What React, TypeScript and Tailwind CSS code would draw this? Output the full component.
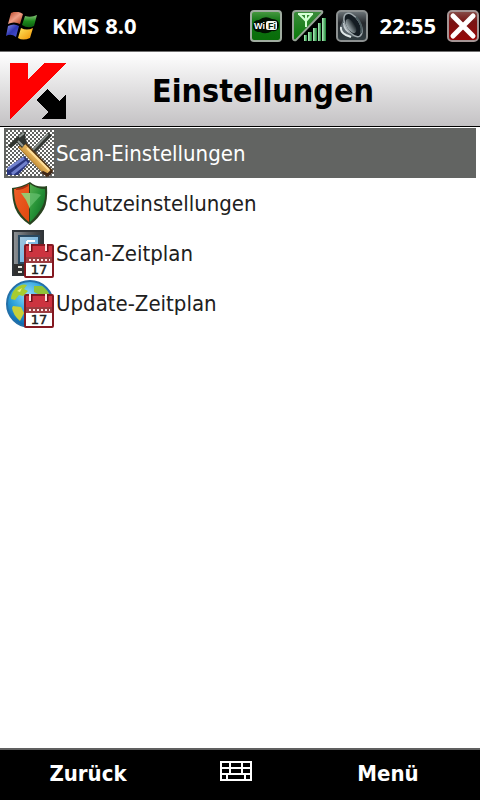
import type { ReactNode } from "react";

function WindowsLogo() {
    return (
        <svg viewBox="0 0 32 28" className="h-7 w-8" aria-hidden="true">
            <defs>
                <linearGradient id="flagRed" x1="0" y1="0" x2="1" y2="1">
                    <stop offset="0" stopColor="#b03a1c" />
                    <stop offset="0.5" stopColor="#f0a088" />
                    <stop offset="1" stopColor="#a83412" />
                </linearGradient>
                <linearGradient id="flagGreen" x1="0" y1="0" x2="0" y2="1">
                    <stop offset="0" stopColor="#8cc47c" />
                    <stop offset="0.5" stopColor="#1c8a1c" />
                    <stop offset="1" stopColor="#0c5c10" />
                </linearGradient>
                <linearGradient id="flagBlue" x1="0" y1="0" x2="1" y2="1">
                    <stop offset="0" stopColor="#8c94e4" />
                    <stop offset="0.5" stopColor="#3038b4" />
                    <stop offset="1" stopColor="#4c58d0" />
                </linearGradient>
                <linearGradient id="flagYellow" x1="0" y1="0" x2="1" y2="1">
                    <stop offset="0" stopColor="#ffe860" />
                    <stop offset="1" stopColor="#f09000" />
                </linearGradient>
            </defs>
            <path d="M5 1Q11-2 17 2L14 12Q8 9 2 12Z" fill="url(#flagRed)" />
            <path d="M19 4Q25 6 31 3L28 14Q22 17 16 13Z" fill="url(#flagGreen)" />
            <path d="M2 14Q8 11 13 14L10 25Q5 21 0 24Z" fill="url(#flagBlue)" />
            <path d="M15 16Q21 19 27 16L24 26Q17 29 12 26Z" fill="url(#flagYellow)" />
        </svg>
    );
}

function WifiIcon() {
    return (
        <svg viewBox="0 0 32 32" className="size-8" role="img" aria-label="WiFi">
            <defs>
                <linearGradient id="wifiBg" x1="0" y1="0" x2="0" y2="1">
                    <stop offset="0" stopColor="#4c9c44" />
                    <stop offset="0.35" stopColor="#107414" />
                    <stop offset="1" stopColor="#086c08" />
                </linearGradient>
            </defs>
            <rect x="1" y="1" width="30" height="30" rx="3" fill="url(#wifiBg)" stroke="#a0aca0" strokeWidth="2" />
            <path d="M3 16Q3 10 9 10Q15 5 22 9Q29 9 29 15Q29 22 22 21Q16 25 10 22Q3 22 3 16Z" fill="#021002" />
            <rect x="16" y="11" width="11" height="9" rx="2" fill="#f4f8f4" />
            <g fontFamily="Liberation Sans, sans-serif" fontSize="9" fontWeight="700">
                <text x="4" y="19" fill="#ffffff">Wi</text>
                <text x="18" y="19" fill="#042004">Fi</text>
            </g>
        </svg>
    );
}

function SignalIcon() {
    return (
        <svg viewBox="0 0 34 32" className="h-8 w-[34px]" role="img" aria-label="Signal">
            <defs>
                <linearGradient id="barFill" x1="0" y1="0" x2="1" y2="0">
                    <stop offset="0" stopColor="#b8f0c4" />
                    <stop offset="1" stopColor="#188030" />
                </linearGradient>
                <linearGradient id="signalBg" x1="0" y1="0" x2="0" y2="1">
                    <stop offset="0" stopColor="#3c8c3c" />
                    <stop offset="1" stopColor="#087808" />
                </linearGradient>
            </defs>
            <path d="M4 1H29Q31 1 30 3L4 30Q1 31 1 28V4Q1 1 4 1Z" fill="url(#signalBg)" stroke="#98a498" strokeWidth="2" />
            <path d="M6 4H21M7 4L14 11L20 4M14 4V17" fill="none" stroke="#d4ffd4" strokeWidth="2" />
            <g fill="url(#barFill)">
                <rect x="12" y="25" width="3" height="6" />
                <rect x="16" y="22" width="4" height="9" />
                <rect x="21" y="18" width="4" height="13" />
                <rect x="26" y="13" width="3" height="18" />
                <rect x="30" y="8" width="4" height="23" />
            </g>
        </svg>
    );
}

function SpeakerIcon() {
    return (
        <svg viewBox="0 0 32 32" className="size-8" role="img" aria-label="Lautstärke">
            <defs>
                <linearGradient id="speakerBg" x1="0" y1="0" x2="0" y2="1">
                    <stop offset="0" stopColor="#70787c" />
                    <stop offset="0.4" stopColor="#24282c" />
                    <stop offset="1" stopColor="#303c40" />
                </linearGradient>
                <linearGradient id="cone" x1="0" y1="0" x2="1" y2="0">
                    <stop offset="0" stopColor="#a8b4b8" />
                    <stop offset="1" stopColor="#141c20" />
                </linearGradient>
            </defs>
            <rect x="1" y="1" width="30" height="30" rx="4" fill="url(#speakerBg)" stroke="#8c9090" strokeWidth="2" />
            <path d="M4 17L9 6L22 26L13 27Q4 25 4 17Z" fill="#59646a" />
            <path d="M5 17Q4 22 10 25L15 27" fill="none" stroke="#e0e8e8" strokeWidth="2" />
            <path d="M8 13Q8 20 15 23" fill="none" stroke="#c4ccd0" strokeWidth="2" />
            <ellipse cx="17" cy="15" rx="7" ry="13" transform="rotate(-32 17 15)" fill="#141c22" stroke="#a0aaae" strokeWidth="1.500" />
            <ellipse cx="15" cy="16" rx="4" ry="8" transform="rotate(-32 15 16)" fill="url(#cone)" />
            <path d="M20 7Q27 14 25 23" fill="none" stroke="#4c5c60" strokeWidth="2" />
        </svg>
    );
}

function CloseIcon() {
    return (
        <svg viewBox="0 0 32 32" className="size-8" aria-hidden="true">
            <defs>
                <linearGradient id="closeBg" x1="0" y1="0" x2="0" y2="1">
                    <stop offset="0" stopColor="#88504c" />
                    <stop offset="0.35" stopColor="#781414" />
                    <stop offset="1" stopColor="#980808" />
                </linearGradient>
            </defs>
            <rect x="1" y="1" width="30" height="30" rx="4" fill="url(#closeBg)" stroke="#a49494" strokeWidth="2" />
            <path d="M6 6L26 26M26 6L6 26" stroke="#ffffff" strokeWidth="5" strokeLinecap="round" />
        </svg>
    );
}

function KasperskyLogo() {
    return (
        <svg viewBox="0 0 56 56" className="size-14" shapeRendering="crispEdges" aria-hidden="true">
            <path d="M0 0H18V16L34 0H56L0 56Z" fill="#ff0000" />
            <path d="M37 26L49 38L56 32V56H31L38 49L26 37Z" fill="#000000" />
        </svg>
    );
}

function ToolsIcon() {
    return (
        <svg viewBox="0 0 50 50" className="size-[50px]" aria-hidden="true">
            <defs>
                <pattern id="dither" width="4" height="4" patternUnits="userSpaceOnUse">
                    <rect width="4" height="4" fill="#ffffff" />
                    <rect width="2" height="2" fill="#626462" />
                    <rect x="2" y="2" width="2" height="2" fill="#626462" />
                </pattern>
                <linearGradient id="wood" x1="0" y1="1" x2="1" y2="0">
                    <stop offset="0.300" stopColor="#b07820" />
                    <stop offset="0.600" stopColor="#f0c068" />
                </linearGradient>
            </defs>
            <rect width="50" height="50" fill="#626462" />
            <rect x="2" y="2" width="48" height="46" fill="url(#dither)" shapeRendering="crispEdges" />
            <path d="M46 6L26 27" stroke="#343834" strokeWidth="5" />
            <path d="M44 6L25 26" stroke="#808884" strokeWidth="2" />
            <path d="M3 41L20 28L26 34L14 47H3Z" fill="#28347c" />
            <path d="M4 41L20 30M8 46L23 34" stroke="#7080cc" strokeWidth="3" />
            <path d="M17 16L46 46" stroke="#503414" strokeWidth="9" />
            <path d="M17 17L44 45" stroke="url(#wood)" strokeWidth="7" />
            <path d="M23 20L45 42" stroke="#ffe09c" strokeWidth="2" />
            <path d="M4 18L15 7Q19 3 22 4L21 9L23 14L18 20L13 15L7 20Z" fill="#303430" />
            <path d="M14 13L19 18M15 9L20 5" stroke="#909894" strokeWidth="2" />
            <path d="M38 44L44 47L48 43" fill="none" stroke="#402818" strokeWidth="3" />
        </svg>
    );
}

function ShieldIcon() {
    return (
        <svg viewBox="0 0 50 50" className="size-[50px]" aria-hidden="true">
            <defs>
                <linearGradient id="shieldGreen" x1="0" y1="0" x2="1" y2="1">
                    <stop offset="0" stopColor="#58b050" />
                    <stop offset="0.450" stopColor="#289438" />
                    <stop offset="1" stopColor="#086420" />
                </linearGradient>
                <linearGradient id="shieldRed" x1="0" y1="0" x2="1" y2="1">
                    <stop offset="0" stopColor="#f06028" />
                    <stop offset="1" stopColor="#e04810" />
                </linearGradient>
            </defs>
            <path d="M26 4Q33 10 43 8Q44 23 40 31Q35 40 26 47Q15 40 11 30Q8 21 8 10Q18 9 26 4Z" fill="#284420" />
            <path d="M25 6Q18 11 10 11Q10 22 13 29Q17 38 25 44Z" fill="url(#shieldRed)" />
            <path d="M26 6Q33 11 41 11Q42 22 38 29Q33 38 26 44Z" fill="url(#shieldGreen)" />
            <path d="M17 15H26V31L22 22Z" fill="#98c870" />
            <path d="M26 15Q34 15 37 17L26 29Z" fill="#68c070" opacity="0.7" />
            <path d="M12 11Q19 11 24 7" fill="none" stroke="#a83010" strokeWidth="2" />
        </svg>
    );
}

// Small red calendar sheet laid over the bottom right of the schedule icons
function CalendarBadge() {
    return (
        <g>
            <rect x="21" y="17" width="28" height="32" rx="1" fill="#ffffff" stroke="#841820" strokeWidth="2" />
            <rect x="22" y="18" width="26" height="11" fill="#cc3440" />
            <rect x="22" y="29" width="26" height="6" fill="#9c3c40" />
            <path d="M25 32H46" stroke="#ffe8e8" strokeWidth="2" strokeDasharray="2 2" />
            <path d="M27 16V24M43 16V24" stroke="#701018" strokeWidth="3" />
            <path d="M26 16V23M42 16V23" stroke="#ffe0e0" strokeWidth="2" />
            <text x="35" y="46" textAnchor="middle" fontFamily="DejaVu Sans, sans-serif" fontSize="13" fontWeight="400" fill="#202020" stroke="#202020" strokeWidth="0.500">17</text>
        </g>
    );
}

function DeviceScheduleIcon() {
    return (
        <svg viewBox="0 0 50 50" className="size-[50px]" aria-hidden="true">
            <defs>
                <linearGradient id="deviceBody" x1="0" y1="0" x2="1" y2="0">
                    <stop offset="0" stopColor="#909498" />
                    <stop offset="0.500" stopColor="#585c60" />
                    <stop offset="1" stopColor="#303438" />
                </linearGradient>
                <linearGradient id="deviceScreen" x1="0" y1="0" x2="1" y2="1">
                    <stop offset="0" stopColor="#a8c8dc" />
                    <stop offset="1" stopColor="#58b0ec" />
                </linearGradient>
            </defs>
            <rect x="9" y="3" width="30" height="44" fill="url(#deviceBody)" stroke="#303438" strokeWidth="2" />
            <rect x="15" y="8" width="20" height="27" fill="url(#deviceScreen)" stroke="#284860" strokeWidth="2" />
            <path d="M23 13H31M23 13V17" fill="none" stroke="#ffffff" strokeWidth="2" />
            <rect x="10" y="36" width="11" height="11" fill="#303030" />
            <path d="M14 39H18M14 44H18" stroke="#e4e4dc" strokeWidth="2" />
            <CalendarBadge />
        </svg>
    );
}

function GlobeScheduleIcon() {
    return (
        <svg viewBox="0 0 50 50" className="size-[50px]" aria-hidden="true">
            <defs>
                <radialGradient id="ocean" cx="0.450" cy="0.300" r="0.700">
                    <stop offset="0" stopColor="#90dcfc" />
                    <stop offset="0.500" stopColor="#30a4dc" />
                    <stop offset="1" stopColor="#0860a8" />
                </radialGradient>
            </defs>
            <circle cx="26" cy="26" r="23" fill="url(#ocean)" stroke="#2470a8" strokeWidth="2" />
            <path d="M12 10Q18 5 23 7L20 11L24 13L19 18L15 17L11 22L7 21Q7 15 12 10Z" fill="#a8cc30" />
            <path d="M9 28L17 29L20 35L16 43Q9 37 8 30Z" fill="#c8d038" />
            <path d="M30 8L38 8Q44 12 46 18L36 17L30 14Z" fill="#90c438" />
            <path d="M13 13L18 10L16 14Z" fill="#e8f088" />
            <CalendarBadge />
        </svg>
    );
}

function KeyboardIcon() {
    return (
        <svg viewBox="0 0 32 20" className="h-5 w-8" shapeRendering="crispEdges" aria-hidden="true">
            <path d="M1 1H31V19H1ZM1 7H31M1 13H31M10 1V13M22 1V13M7 13V19M25 13V19" fill="none" stroke="#ffffff" strokeWidth="2" />
        </svg>
    );
}

type Item = { label: string; icon: ReactNode };

const items: Item[] = [
    { label: "Scan-Einstellungen", icon: <ToolsIcon /> },
    { label: "Schutzeinstellungen", icon: <ShieldIcon /> },
    { label: "Scan-Zeitplan", icon: <DeviceScheduleIcon /> },
    { label: "Update-Zeitplan", icon: <GlobeScheduleIcon /> },
];

export default function App() {
    const selected = 0;

    return (
        <div className="flex min-h-screen flex-col bg-white font-['DejaVu_Sans_Condensed','DejaVu_Sans',sans-serif] text-[#202020]">
            <div className="flex h-[52px] items-center border-b border-[#707070] bg-black pr-px pl-1.5 text-white">
                <WindowsLogo />
                <span className="ml-3.5 font-['Noto_Sans',sans-serif] text-[22px] font-bold">KMS 8.0</span>
                <div className="ml-auto flex items-center gap-2.5">
                    <WifiIcon />
                    <SignalIcon />
                    <SpeakerIcon />
                    <time className="px-px font-['Noto_Sans',sans-serif] text-[22px] font-bold">22:55</time>
                    <button type="button" aria-label="Schließen"><CloseIcon /></button>
                </div>
            </div>

            <header className="flex h-[75px] items-center border-b border-black bg-linear-to-b from-white to-[#c4c2c4] pt-1 pl-2.5">
                <KasperskyLogo />
                <h1 className="flex-1 pr-6 pl-1 text-center text-[32px] font-bold text-black">Einstellungen</h1>
            </header>

            <main className="flex-1 px-1 pt-px">
                <ul>
                    {items.map((item, i) => (
                        <li key={item.label}>
                            <button type="button" className={`flex h-[50px] w-full items-center gap-0.5 text-left text-[22px] ${i === selected ? "bg-[#626462] text-white" : ""}`}>
                                {item.icon}
                                <span>{item.label}</span>
                            </button>
                        </li>
                    ))}
                </ul>
            </main>

            <footer className="grid h-[52px] grid-cols-[22fr_15fr_23fr] border-t-2 border-[#606060] bg-black pb-1 text-[22px] font-bold text-white">
                <button type="button">Zurück</button>
                <button type="button" aria-label="Tastatur" className="flex items-center justify-center pb-1"><KeyboardIcon /></button>
                <button type="button">Menü</button>
            </footer>
        </div>
    );
}
